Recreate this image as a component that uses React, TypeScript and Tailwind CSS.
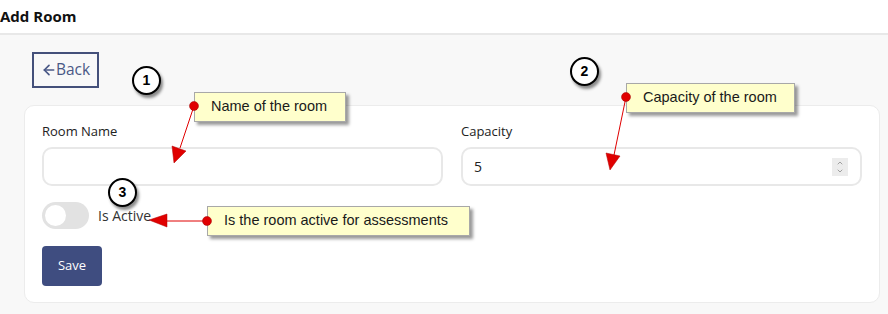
import { ArrowLeft, ChevronUp, ChevronDown } from 'lucide-react';

const font = { fontFamily: '"Segoe UI", "Open Sans", "Noto Sans", sans-serif' };

function Marker({ n, className }: { n: number; className: string }) {
  return (
    <div
      className={`absolute w-[29px] h-[29px] rounded-full bg-white border-2 border-black flex items-center justify-center text-[14px] font-bold text-black shadow-[2px_3px_3px_rgba(0,0,0,0.45)] ${className}`}
      style={{ fontFamily: '"Liberation Sans", Arial, sans-serif' }}
    >
      {n}
    </div>
  );
}

function Callout({ text, className }: { text: string; className: string }) {
  return (
    <div
      className={`absolute h-[30px] flex items-center pl-[16px] pr-[14px] bg-[#ffffcc] border border-[#a8a8a8] text-[14.5px] text-[#1a1a1a] shadow-[3px_3px_3px_rgba(0,0,0,0.4)] ${className}`}
      style={{ fontFamily: '"Liberation Sans", Arial, sans-serif' }}
    >
      {text}
    </div>
  );
}

export default function App() {
  return (
    <div className="relative w-[888px] h-[314px] overflow-hidden bg-[#f8f8f8]" style={font}>
      {/* Header */}
      <div className="h-[35px] bg-white border-b-2 border-[#e8e8e8] flex items-center">
        <h1 className="text-[15px] font-bold text-[#111] leading-none">Add Room</h1>
      </div>

      <div className="pl-[24px] pr-[8px] pt-[17px]">
        <button className="ml-[8px] h-[36px] w-[67px] border-2 border-[#44507a] flex items-center justify-center text-[15.5px] text-[#4a5886] bg-transparent">
          <ArrowLeft className="w-[16px] h-[16px] -mr-[1px]" strokeWidth={2.5} />
          <span>Back</span>
        </button>

        {/* Card */}
        <div className="mt-[17px] bg-white border border-[#ececec] rounded-[10px] pt-[16px] pb-[16px] pl-[17px] pr-[17px]">
          <div className="grid grid-cols-2 gap-[18px]">
            <div>
              <label className="block text-[13px] text-[#222] mb-[7px] leading-[18px]">Room Name</label>
              <div className="h-[39px] border-2 border-[#e8e8e8] rounded-[10px] bg-white" />
            </div>
            <div>
              <label className="block text-[13px] text-[#222] mb-[7px] leading-[18px]">Capacity</label>
              <div className="h-[39px] border-2 border-[#e8e8e8] rounded-[10px] bg-white flex items-center pl-[11px] pr-[12px]">
                <span className="text-[14px] text-[#222] flex-1">5</span>
                <div className="w-[16px] h-[18px] bg-[#ececec] flex flex-col items-center justify-center text-[#777]">
                  <ChevronUp className="w-[10px] h-[8px]" strokeWidth={2} />
                  <ChevronDown className="w-[10px] h-[8px]" strokeWidth={2} />
                </div>
              </div>
            </div>
          </div>

          <div className="flex items-center mt-[16px] gap-[9px]">
            <div className="w-[47px] h-[27px] rounded-full bg-[#e2e2e2] flex items-center pl-[3px]">
              <div className="w-[21px] h-[21px] rounded-full bg-white" />
            </div>
            <span className="text-[14px] text-[#333]">Is Active</span>
          </div>

          <button className="mt-[17px] w-[60px] h-[40px] rounded-[4px] bg-[#3f4d80] text-white text-[13px]">Save</button>
        </div>
      </div>

      {/* Annotation overlay */}
      <svg className="absolute inset-0 pointer-events-none" width="888" height="314">
        <line x1="194" y1="106" x2="180" y2="148" stroke="#e00000" strokeWidth="1" />
        <polygon points="174,163 172,146 186,151" fill="#e00000" stroke="#b00000" strokeWidth="0.5" />
        <line x1="626" y1="97" x2="614" y2="155" stroke="#e00000" strokeWidth="1" />
        <polygon points="610,170 606,153 620,156" fill="#e00000" stroke="#b00000" strokeWidth="0.5" />
        <line x1="207" y1="221" x2="165" y2="221" stroke="#e00000" strokeWidth="1" />
        <polygon points="149,220 167,214 167,227" fill="#e00000" stroke="#b00000" strokeWidth="0.5" />
      </svg>

      <Callout text="Name of the room" className="left-[194px] top-[92px] w-[152px]" />
      <Callout text="Capacity of the room" className="left-[626px] top-[83px] w-[169px]" />
      <Callout text="Is the room active for assessments" className="left-[207px] top-[206px] w-[263px]" />

      <svg className="absolute inset-0 pointer-events-none" width="888" height="314">
        <circle cx="194" cy="106" r="4.5" fill="#e00000" stroke="#a00000" strokeWidth="0.5" />
        <circle cx="626" cy="97" r="4.5" fill="#e00000" stroke="#a00000" strokeWidth="0.5" />
        <circle cx="207" cy="221" r="4.5" fill="#e00000" stroke="#a00000" strokeWidth="0.5" />
      </svg>

      <Marker n={1} className="left-[132px] top-[66px]" />
      <Marker n={2} className="left-[570px] top-[57px]" />
      <Marker n={3} className="left-[108px] top-[178px]" />
    </div>
  );
}
